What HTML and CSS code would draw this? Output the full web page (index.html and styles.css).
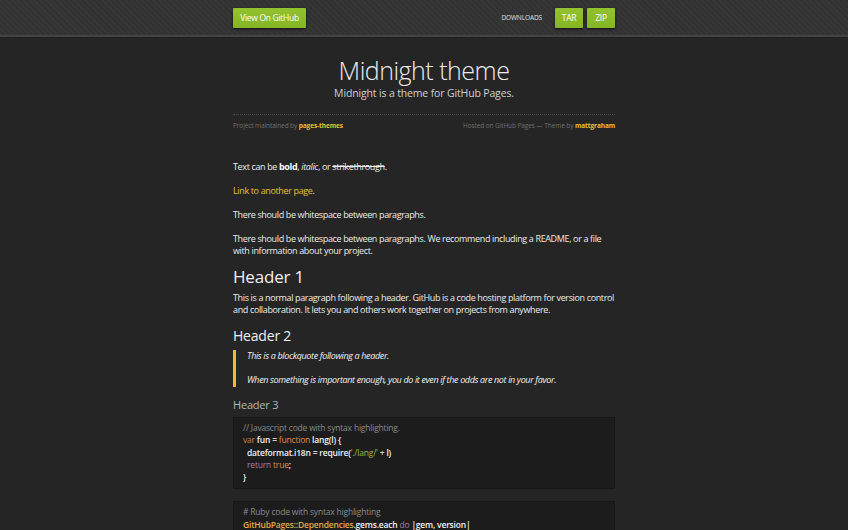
FILE: index.html
```html
<!DOCTYPE html>
<html>
<head>
<meta charset="utf-8">
<link rel="stylesheet" href="styles.css">
</head>
<body>
<div class="nav">
  <div class="wrap nav-inner">
    <a class="btn btn-gh" href="#">View On GitHub</a>
    <div class="downloads">
      <span class="dl-label">DOWNLOADS</span>
      <a class="btn btn-sm" href="#">TAR</a>
      <a class="btn btn-sm" href="#">ZIP</a>
    </div>
  </div>
</div>
<div class="wrap">
  <header class="hero">
    <h1 class="title">Midnight theme</h1>
    <h2 class="subtitle">Midnight is a theme for GitHub Pages.</h2>
    <div class="credits">
      <span>Project maintained by <a href="#">pages-themes</a></span>
      <span>Hosted on GitHub Pages — Theme by <a href="#">mattgraham</a></span>
    </div>
  </header>
  <main class="content">
    <p>Text can be <b>bold</b>, <i>italic</i>, or <s>strikethrough</s>.</p>
    <p><a href="#">Link to another page</a>.</p>
    <p>There should be whitespace between paragraphs.</p>
    <p>There should be whitespace between paragraphs. We recommend including a README, or a file with information about your project.</p>
    <h1 class="h1">Header 1</h1>
    <p>This is a normal paragraph following a header. GitHub is a code hosting platform for version control and collaboration. It lets you and others work together on projects from anywhere.</p>
    <h2 class="h2">Header 2</h2>
    <blockquote class="quote">
      <p>This is a blockquote following a header.</p>
      <p>When something is important enough, you do it even if the odds are not in your favor.</p>
    </blockquote>
    <h3 class="h3">Header 3</h3>
    <pre class="code"><span class="c">// Javascript code with syntax highlighting.</span>
<span class="k">var</span> fun <span class="o">=</span> <span class="f">function</span> lang(l) {
  dateformat.i18n <span class="o">=</span> require(<span class="s">'./lang/'</span> <span class="o">+</span> l)
  <span class="r">return</span> <span class="f">true</span>;
}</pre>
    <pre class="code"><span class="c"># Ruby code with syntax highlighting</span>
<span class="y">GitHubPages::Dependencies</span>.gems.each <span class="r">do</span> |gem, version|
  s.add_dependency(gem, <span class="s">"= #{version}"</span>)
<span class="r">end</span></pre>
  </main>
</div>
</body>
</html>
```
FILE: styles.css
```css
html, body {
  margin: 0;
  padding: 0;
}
body {
  background: #252525;
  color: #ececec;
  font-family: "Open Sans", "DejaVu Sans", sans-serif;
  font-size: 9px;
  line-height: 12px;
  letter-spacing: -0.36px;
}
a {
  color: #e8c02f;
  text-decoration: none;
}
.wrap {
  width: 382px;
  margin: 0 auto;
}
.nav {
  height: 35px;
  background-color: #333;
  background-image: repeating-linear-gradient(45deg, rgba(255,255,255,0.015) 0 2px, rgba(0,0,0,0.02) 2px 4px);
  border-bottom: 2px solid #444;
  box-shadow: 0 1px 0 #1e1e1e;
}
.nav-inner {
  display: flex;
  justify-content: space-between;
  align-items: flex-start;
  padding-top: 8px;
}
.btn {
  display: block;
  height: 20px;
  line-height: 20px;
  background: linear-gradient(#93c22f, #85b425);
  color: #fff;
  font-size: 8.5px;
  text-align: center;
  border-radius: 1px;
  box-shadow: 0 1px 3px rgba(0,0,0,0.7);
  letter-spacing: -0.3px;
}
.btn-gh {
  width: 73px;
}
.downloads {
  display: flex;
  align-items: flex-start;
  gap: 4px;
}
.dl-label {
  font-size: 6.5px;
  line-height: 20px;
  color: #e0e0e0;
  margin-right: 9px;
  letter-spacing: -0.1px;
}
.btn-sm {
  width: 28px;
}
.hero {
  text-align: center;
  padding-top: 18px;
}
.title {
  margin: 0;
  font-weight: 300;
  font-size: 25px;
  line-height: 30px;
  color: #ececec;
  letter-spacing: -0.5px;
}
.subtitle {
  margin: 0;
  font-weight: 400;
  font-size: 10.5px;
  line-height: 16px;
  color: #d0d0d0;
  letter-spacing: -0.15px;
}
.credits {
  display: flex;
  justify-content: space-between;
  margin-top: 13px;
  border-top: 1px dotted #4a4a4a;
  padding-top: 5px;
  font-size: 6.5px;
  line-height: 12px;
  color: #6f6f6f;
  letter-spacing: -0.1px;
}
.credits a {
  font-weight: 700;
}
.content {
  padding-top: 29px;
}
.content p {
  margin: 0 0 12px;
}
.content b {
  font-weight: 700;
  color: #fff;
}
.h1 {
  margin: -1px 0 6px;
  font-weight: 400;
  font-size: 17px;
  line-height: 18px;
  color: #f0f0f0;
  letter-spacing: -0.2px;
}
.h2 {
  margin: 0 0 6px;
  font-weight: 400;
  font-size: 14px;
  line-height: 16px;
  color: #f0f0f0;
  letter-spacing: -0.2px;
}
.h3 {
  margin: 0 0 5px;
  font-weight: 400;
  font-size: 11px;
  line-height: 14px;
  color: #b5b5b5;
  letter-spacing: -0.2px;
}
.quote {
  margin: 0 0 11px;
  padding: 0 0 1px 11px;
  border-left: 3px solid #e8c02f;
  font-style: italic;
  color: #f2f2f2;
}
.quote p:last-child {
  margin-bottom: 0;
}
.code {
  margin: 0 0 12px;
  background: #1c1c1c;
  border: 1px solid #171717;
  padding: 4px 9px 5px;
  font-family: "Open Sans", "DejaVu Sans", sans-serif;
  font-size: 8.5px;
  line-height: 12.3px;
  color: #f2f2f2;
  font-weight: 600;
  letter-spacing: -0.2px;
  white-space: pre;
}
.code .c { color: #8a8a8a; font-weight: 400; }
.code .k { color: #cf7f3c; font-weight: 400; }
.code .f { color: #e28b3b; font-weight: 400; }
.code .o { color: #d0d0d0; }
.code .s { color: #98b84e; font-weight: 400; }
.code .r { color: #a97aa8; font-weight: 400; }
.code .y { color: #e0a94a; }
```
